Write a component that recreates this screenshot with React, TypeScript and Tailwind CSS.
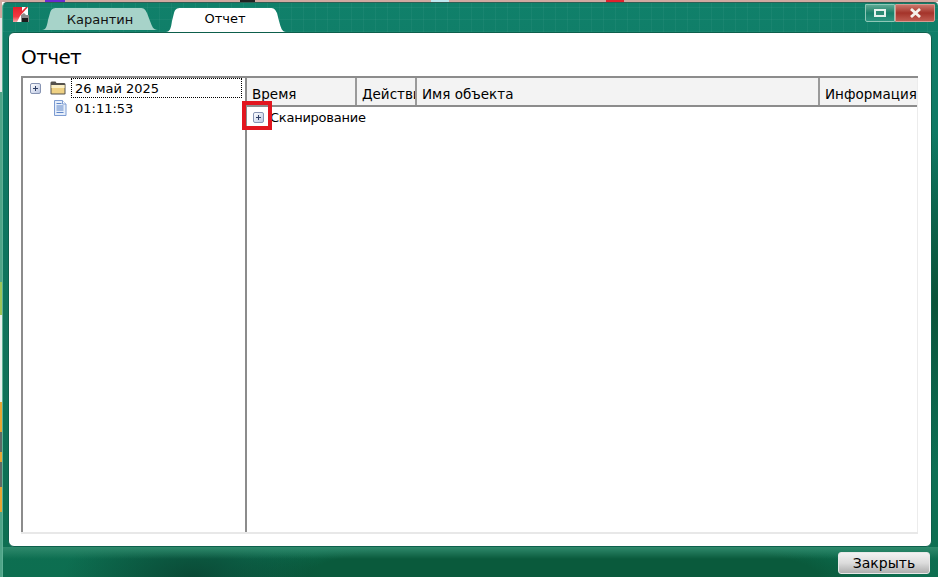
import React from "react";

const font = { fontFamily: '"DejaVu Sans", Verdana, sans-serif' };

const Expander = () => (
  <div className="flex h-[11px] w-[11px] shrink-0 items-center justify-center rounded-[2px] border border-[#8794b3] bg-gradient-to-br from-white to-[#bcc7e2]">
    <svg width="7" height="7" viewBox="0 0 7 7">
      <path d="M3.5 1v5M1 3.5h5" stroke="#2f3f66" strokeWidth="1" />
    </svg>
  </div>
);

const KasperskyLogo = () => (
  <svg width="16" height="16" viewBox="0 0 16 16">
    <defs>
      <linearGradient id="kav" x1="0" y1="0" x2="0" y2="1">
        <stop offset="0" stopColor="#e3202b" />
        <stop offset="0.65" stopColor="#ee3a42" />
        <stop offset="1" stopColor="#f7a9ac" />
      </linearGradient>
    </defs>
    <path d="M0 0h15v8h-6v7H0z" fill="#fff" />
    <path d="M0 0h9v4l4-4h2L7 9 4 15H0z" fill="url(#kav)" />
    <path d="M8 8l3-2 2 2h3v7H8z" fill="#8a8a8a" />
    <path d="M9 11h6v4H9z" fill="#1d1d1d" />
  </svg>
);

const FolderIcon = () => (
  <svg width="16" height="14" viewBox="0 0 16 14">
    <path d="M0.5 3V1.5L1.5 .5h4l1 1.5h8l1 1v10l-1 .5h-13l-1-.5z" fill="#55524c" />
    <path d="M1.5 4h13v8.5h-13z" fill="#efd183" />
    <path d="M1.5 4h13v3h-13z" fill="#fbf0c6" />
  </svg>
);

const DocIcon = () => (
  <svg width="14" height="16" viewBox="0 0 14 16">
    <path d="M1.5 .5h8l3.5 3.5v11.5h-11.5z" fill="#e6eefa" stroke="#7d9cd2" />
    <path d="M3.5 3.5h5M3.5 6h7M3.5 8h7M3.5 10h7M3.5 12.5h7" stroke="#5f86c8" />
    <path d="M9.5 .5v3.5h3.5" fill="#fff" stroke="#7d9cd2" />
  </svg>
);

const columns = [
  { title: "Время", width: "w-[110px]" },
  { title: "Действия", width: "w-[60px]" },
  { title: "Имя объекта", width: "w-[403px]" },
  { title: "Информация", width: "w-[97px]" },
];

const App = () => {
  return (
    <div
      className="relative flex h-[577px] w-[938px] flex-col overflow-hidden text-[13px] text-black"
      style={font}
    >
      {/* desktop showing above and left of the window */}
      <div className="h-[2px] shrink-0 bg-[linear-gradient(90deg,#d2a8a0_45px,#6a2bd0_45px,#6a2bd0_65px,#d2a8a0_65px,#d2a8a0_240px,#222_240px,#222_255px,#d2a8a0_255px,#d2a8a0_431px,#bfe8f0_431px,#bfe8f0_449px,#d2a8a0_449px,#d2a8a0_606px,#e2202c_606px,#e2202c_624px,#d2a8a0_624px)]" />
      <div className="flex flex-1">
        <div className="w-[2px] shrink-0 bg-[linear-gradient(180deg,#d2a8a0_16px,#e6e6e6_16px,#e6e6e6_90px,#4fa488_90px,#4fa488_280px,#9bc458_280px,#9bc458_313px,#e6f0ec_313px,#e6f0ec_400px,#e8a533_400px,#e8a533_430px,#5e6a66_430px,#5e6a66_450px,#e8a533_450px,#e8a533_460px,#5e6a66_460px,#5e6a66_485px,#e8a533_485px,#e8a533_510px,#4fa488_510px)]" />

        <div className="flex flex-1 flex-col rounded-t-[5px] border-x border-t border-x-[#5fb096] border-t-[#2e5f55] bg-[radial-gradient(ellipse_130px_60px_at_190px_100%,#0a4a36_0%,transparent_100%),radial-gradient(ellipse_340px_50px_at_560px_100%,#0a5a3c_0%,#0a5a3c_75%,transparent_100%),radial-gradient(ellipse_160px_170px_at_100%_300px,#0a5238_0%,transparent_100%),linear-gradient(180deg,#10806a_0%,#0e7560_35%,#0d6e50_100%)]">
          {/* title bar with tabs */}
          <div className="flex h-[29px] items-start bg-[repeating-linear-gradient(90deg,#ffffff0a_0px,#ffffff0a_1px,transparent_1px,transparent_12px),repeating-linear-gradient(0deg,#ffffff0a_0px,#ffffff0a_1px,transparent_1px,transparent_12px)]">
            <div className="ml-[10px] mt-[4px] w-[16px]">
              <KasperskyLogo />
            </div>
            <div className="relative ml-[13px] mt-[5px] flex h-[22px] w-[116px] items-center justify-center">
              <svg width="116" height="22" viewBox="0 0 116 22" className="absolute inset-0">
                <path
                  d="M0 22C4 22 5 18 6 12L8 5C9 1 11 0 15 0H98C102 0 103 1 105 5L108 13C110 18 111 22 116 22Z"
                  fill="#a7d3c9"
                />
              </svg>
              <span className="relative pt-[2px] text-[#111]">Карантин</span>
            </div>
            <div className="relative ml-[8px] mt-[5px] flex h-[24px] w-[120px] items-center justify-center">
              <svg width="120" height="24" viewBox="0 0 120 24" className="absolute inset-0">
                <path
                  d="M0 24C4 24 5 20 6 13L8 5C9 1 11 0 15 0H104C108 0 109 1 111 5L113 13C115 20 116 24 120 24Z"
                  fill="#fff"
                />
              </svg>
              <span className="relative pb-[2px] pr-[2px]">Отчет</span>
            </div>
            <div className="ml-auto mr-[3px] mt-[1px] flex">
              <div className="flex h-[18px] w-[30px] items-center justify-center rounded-bl-[2px] border border-[#8fc7b7] bg-gradient-to-b from-[#5ba893] via-[#17806a] to-[#2e9580]">
                <div className="h-[8px] w-[12px] border-2 border-[#e6f2ee] bg-[#2e8a74]" />
              </div>
              <div className="flex h-[18px] w-[40px] items-center justify-center rounded-br-[2px] border border-[#d79a92] bg-gradient-to-b from-[#c9746a] via-[#a4332a] to-[#bf5b50]">
                <svg width="13" height="10" viewBox="0 0 13 10">
                  <path d="M2 1l9 8M11 1l-9 8" stroke="#f4f0ea" strokeWidth="2.8" />
                </svg>
              </div>
            </div>
          </div>

          {/* main panel */}
          <div className="ml-[5px] mr-[6px] flex h-[515px] flex-col rounded-[6px] border border-[#0d5f4c] bg-white pl-[12px] pr-[13px] pt-[10px]">
            <h1 className="h-[33px] text-[20px] leading-[29px] tracking-[-0.6px]">Отчет</h1>
            <div className="flex h-[458px] border-y-2 border-t-[#8c8c8c] border-b-[#e8e8e8]">
              {/* tree */}
              <div className="w-[224px] shrink-0 border-l-2 border-[#8c8c8c]">
                <div className="flex h-[20px] items-center pl-[7px] pr-[3px]">
                  <Expander />
                  <div className="ml-[9px] w-[16px]">
                    <FolderIcon />
                  </div>
                  <span className="ml-[5px] h-[20px] flex-1 border border-dotted border-black pl-[3px] leading-[20px]">
                    26 май 2025
                  </span>
                </div>
                <div className="flex h-[20px] items-center pl-[30px]">
                  <DocIcon />
                  <span className="ml-[8px] pt-[1px]">01:11:53</span>
                </div>
              </div>

              {/* report list */}
              <div className="relative min-w-0 flex-1 overflow-hidden border-l-2 border-r border-l-[#8c8c8c] border-r-[#ececec]">
                <div className="flex h-[29px] border-b-2 border-[#8c8c8c] bg-[#f3f3f3]">
                  {columns.map((col) => (
                    <div
                      key={col.title}
                      className={`${col.width} shrink-0 overflow-hidden whitespace-nowrap border-r-2 border-[#9a9a9a] pl-[5px] pt-[7px] text-[13.5px] leading-[18px] last:border-r-0`}
                    >
                      {col.title}
                    </div>
                  ))}
                </div>
                <div className="flex h-[20px] items-center pl-[6px]">
                  <Expander />
                  <span className="ml-[6px] pt-[1px] tracking-[-0.25px]">Сканирование</span>
                </div>
              </div>
            </div>
          </div>

          {/* footer */}
          <div className="flex flex-1 items-start justify-end bg-[linear-gradient(180deg,#2f8a6c_0px,transparent_12px)] pr-[8px] pt-[5px]">
            <button className="h-[22px] w-[92px] rounded-[3px] border border-[#e8e8e8] bg-gradient-to-b from-[#f2f2f2] via-[#dcdcdc] to-[#aeaeae] text-[14px] leading-[20px] text-black">
              Закрыть
            </button>
          </div>
        </div>
      </div>
      {/* red marker drawn over the list's expander */}
      <div className="absolute left-[242px] top-[101px] h-[29px] w-[30px] border-4 border-[#e2161f]" />
    </div>
  );
};

export default App;
